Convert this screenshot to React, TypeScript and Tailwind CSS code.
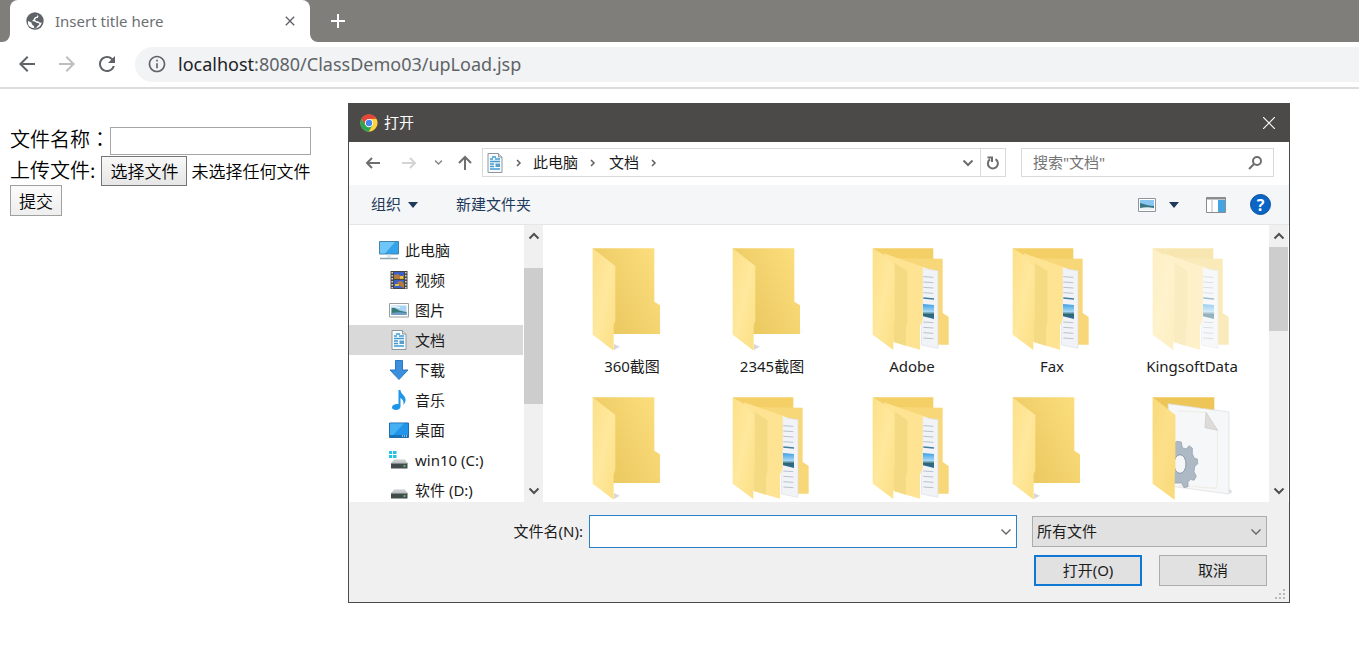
import React, { useState } from "react";
import {
  MdArrowBack,
  MdArrowForward,
  MdRefresh,
  MdInfoOutline,
  MdClose,
} from "react-icons/md";

function GlobeIcon() {
  return (
    <svg viewBox="0 0 54 54" className="size-[18px] shrink-0" aria-hidden="true">
      <circle cx="27" cy="27" r="26" fill="#5f6368" />
      <path
        d="M28 6c9 1 8 5 4 8-5 1-8 2-8 6 0 3-4 3-5 6 1 3 4 2 8 3 4 0 4 4 8 4 4 0 5 2 5 4-1 4-6 4-7 8-1 2-4 3-8 3-2-2 1-5-2-7-4-2-6-4-6-8-2-3-7-4-11-6-1 6 0 12 4 16 4 4 10 6 17 6 11 0 19-8 20-18-3 2-6 1-8-1-2-3-6-2-9-3-3-2-3-6 0-8 3-1 6-1 7-4C38 9 34 6 28 6z"
        fill="#fff"
      />
    </svg>
  );
}

function ChromeIcon() {
  return (
    <svg viewBox="0 0 48 48" className="size-[18px] shrink-0" aria-hidden="true">
      <circle cx="24" cy="24" r="23" fill="#fdd23c" />
      <path d="M4 12.500A23 23 0 0 1 44 12.500L24 13 14 30z" fill="#e2463a" />
      <path d="M4 12.500A23 23 0 0 0 23 47L33 30 24 34 14 29z" fill="#2fa355" />
      <circle cx="24" cy="24" r="11" fill="#fff" />
      <circle cx="24" cy="24" r="8.500" fill="#4488ee" />
    </svg>
  );
}

type StrokeProps = { d: string; className: string };

function Stroke({ d, className }: StrokeProps) {
  return (
    <svg viewBox="0 0 12 12" className={className} fill="none" stroke="currentColor" aria-hidden="true">
      <path d={d} />
    </svg>
  );
}

const DOWN = "M1.500 3.500 6 8l4.500-4.500";
const UP = "M1.500 8.500 6 4l4.500 4.500";
const RIGHT = "M4 3l3 3-3 3";

function DocIcon() {
  return (
    <svg viewBox="0 0 20 20" className="size-5 shrink-0" aria-hidden="true">
      <path d="M3 .5h10.500L17 4v15.500H3z" fill="#f7fafc" stroke="#8d979e" />
      <path d="M13.500.5V4H17" fill="#dde4e8" stroke="#8d979e" />
      <path d="M7 4h4M5 6h3M10 6h5M5 8.500h10M5 11h4M5 13.500h4M5 16h10" stroke="#3f9bd3" strokeWidth="1.300" />
      <path d="M10.500 10.500h4.500V14h-4.500z" fill="#5a9fc9" />
    </svg>
  );
}

function PictureIcon() {
  return (
    <svg viewBox="0 0 20 20" className="size-5 shrink-0" aria-hidden="true">
      <path d="M.5 3.500h19v13.500H.5z" fill="#fff" stroke="#9a9fa3" />
      <path d="M2.500 5.500h15V15h-15z" fill="#a9d5f5" />
      <path d="M2.500 8c3-1 5 1 8 2.500 3 1 5 1 7 1.500v3h-15z" fill="#3a7a78" />
      <path d="M2.500 13c5-1 10-1 15 0v2h-15z" fill="#6f9fc8" />
      <path d="M3 7c3-1 5 .5 8 .5" stroke="#fff" fill="none" />
    </svg>
  );
}

function PcIcon() {
  return (
    <svg viewBox="0 0 20 20" className="size-5 shrink-0" aria-hidden="true">
      <path d="M.5 1.500h19v12.500H.5z" fill="#35a3ea" stroke="#4782a8" />
      <path d="M1 2h15L6 13.500H1z" fill="#6fc6f8" />
      <path d="M8 14.500h4v3H8z" fill="#dbe8ee" />
      <path d="M1 18.500h18" stroke="#8fa3ae" strokeWidth="1.500" />
    </svg>
  );
}

function VideoIcon() {
  return (
    <svg viewBox="0 0 20 20" className="size-5 shrink-0" aria-hidden="true">
      <path d="M1.500 1h17v18h-17z" fill="#454545" />
      <path d="M5 2h10v7H5zM5 10h10v8H5z" fill="#3b5fc4" />
      <path d="M5 5l4-1 3 3 3-2v4H5zM8 12l5-1 2 3v4l-4-2z" fill="#b57a3c" />
      <path d="M11 6h3v3h-3zM6 14h4v2H6z" fill="#e5c33c" />
      <path d="M3.200 2v17M16.800 2v17" stroke="#d8d8d8" strokeWidth="1.500" strokeDasharray="1.500 1.500" />
    </svg>
  );
}

function DownloadIcon() {
  return (
    <svg viewBox="0 0 20 20" className="size-5 shrink-0" aria-hidden="true">
      <path d="M6.500.5h7V10H19l-9 9.500L1 10h5.500z" fill="#3b8fdd" stroke="#2c78c2" />
    </svg>
  );
}

function MusicIcon() {
  return (
    <svg viewBox="0 0 20 20" className="size-5 shrink-0" aria-hidden="true">
      <path
        d="M9.500 0h2c0 4 4.500 5 5 9 .3 3-1 4.500-2 6 .5-4-1-6-3-7v8.500c0 2-2 3.500-4.500 3.500C4.500 20 3 19 3 17.300 3 15 6 13.500 9.500 14z"
        fill="#1b96ea"
      />
    </svg>
  );
}

function DesktopIcon() {
  return (
    <svg viewBox="0 0 20 20" className="size-5 shrink-0" aria-hidden="true">
      <path d="M.5 3h19v14.500H.5z" fill="#2196e8" stroke="#1d6fae" />
      <path d="M1 3.500h14L4 15H1z" fill="#45b1f4" />
      <path d="M1 16h18" stroke="#1668a8" strokeWidth="1.500" />
      <path d="M13 16h1M15 16h1M17 16h1" stroke="#fff" />
    </svg>
  );
}

function DriveIcon({ system = false }: { system?: boolean }) {
  return (
    <svg viewBox="0 0 20 20" className="size-5 shrink-0" aria-hidden="true">
      {system && <path d="M0 1h3v3H0zM4 1h3.500v3H4zM0 5h3v3H0zM4 5h3.500v3H4z" fill="#22c4e8" />}
      <path d="M5 9.500h11l2.500 4H2z" fill="#c9cccd" />
      <path d="M2 13h16.500v5.500H2z" fill="#434a4b" />
      <path d="M2 13.200h16.500" stroke="#9fa4a6" />
      <path d="M14.500 16h2" stroke="#5ee06a" strokeWidth="1.500" />
    </svg>
  );
}

type FolderKind = "empty" | "files" | "gear";

function FolderDefs() {
  return (
    <svg className="absolute size-0" aria-hidden="true">
      <defs>
        <linearGradient id="folderBack" x1="0" y1="0.800" x2="1" y2="0.200">
          <stop offset="0.200" stopColor="#ecca62" />
          <stop offset="1" stopColor="#fbdd7c" />
        </linearGradient>
        <linearGradient id="folderFlap" x1="0" y1="0" x2="1" y2="1">
          <stop offset="0" stopColor="#fce08a" />
          <stop offset="0.500" stopColor="#ffe89c" />
          <stop offset="1" stopColor="#fbdf85" />
        </linearGradient>
        <linearGradient id="folderShadow" x1="0" y1="0" x2="1" y2="0">
          <stop offset="0" stopColor="#9a9a9a" stopOpacity="0.400" />
          <stop offset="1" stopColor="#9a9a9a" stopOpacity="0" />
        </linearGradient>
        <linearGradient id="photoSky" x1="0" y1="0" x2="0" y2="1">
          <stop offset="0" stopColor="#3d9fe6" />
          <stop offset="0.500" stopColor="#a8d8f5" />
          <stop offset="0.700" stopColor="#2f6672" />
          <stop offset="1" stopColor="#2b6fa0" />
        </linearGradient>
      </defs>
    </svg>
  );
}

function FolderIcon({ kind }: { kind: FolderKind }) {
  return (
    <svg viewBox="0 0 240 312" className="h-[104px] w-20" aria-hidden="true">
      {kind === "empty" && (
        <>
          <path d="M200 240l24 10-20 8zM66 288l18 8-18 10z" fill="url(#folderShadow)" />
          <path d="M2 1h185v160l17 11v86H60z" fill="url(#folderBack)" />
          <path d="M2 1l68 53v166l-5 12v76L2 260z" fill="url(#folderFlap)" />
        </>
      )}
      {kind === "files" && (
        <>
          <path d="M2 1h182v40H40z" fill="#f3cf66" />
          <path d="M60 30l152 2v163l18 12v83h-38V70z" fill="#f7d778" />
          <path d="M152 62l46 6v233l-50-10z" fill="#f1f3f7" stroke="#dcdfe4" strokeWidth="2" />
          <path
            d="M154 86l30 2M154 102l30 2M154 118l30 2M154 134l30 2M154 222l30 2M154 238l30 2M154 254l30 2M154 270l30 2"
            stroke="#b8c1cc"
            strokeWidth="3"
          />
          <path d="M154 150l32 3" stroke="#417d9e" strokeWidth="5" />
          <path d="M153 168l33 3v42l-33-8z" fill="url(#photoSky)" />
          <path d="M36 16l116 40v158l-8 20v71l-78-22z" fill="#fee392" />
          <path d="M68 45l38 24v152l-4 18v54l-38-12z" fill="#f4da83" />
          <path d="M2 1l34 20 32 36v160l-4 14v75L2 260z" fill="url(#folderFlap)" />
        </>
      )}
      {kind === "gear" && (
        <>
          <path d="M2 1h185v80H60z" fill="#eec657" />
          <path d="M230 276l18 8-16 6z" fill="url(#folderShadow)" />
          <path d="M48 20l183 25v246L60 268z" fill="#f6f7f8" stroke="#d9dadc" strokeWidth="2" />
          <path d="M80 42l82 4 34 54v150l-4 24-110-9" fill="none" stroke="#e9e5d9" strokeWidth="2" />
          <path d="M162 46l35 54-38-8z" fill="#dddcd8" stroke="#c9c8c5" strokeWidth="2" />
          <path
            d="M74 133l14 2 3 17 12 4 8-10 10 7 0 17 6 14 9 2 1 14-9 9-2 15 7 14-7 12-11-3-7 9v13l-12 3-7-14H62V142z"
            fill="#adbac6"
            stroke="#8e9ba8"
            strokeWidth="2"
          />
          <ellipse cx="84" cy="201" rx="18" ry="28" fill="#f5f6f7" stroke="#8997a5" strokeWidth="3" />
          <path d="M2 1l68 53v166l-2 12v76L2 260z" fill="url(#folderFlap)" />
          <path d="M2 1l68 53v166l-2 12v76L2 260z" fill="#f5c84e" fillOpacity="0.250" />
        </>
      )}
    </svg>
  );
}

const places = [
  { name: "此电脑", icon: <PcIcon />, root: true },
  { name: "视频", icon: <VideoIcon /> },
  { name: "图片", icon: <PictureIcon /> },
  { name: "文档", icon: <DocIcon />, current: true },
  { name: "下载", icon: <DownloadIcon /> },
  { name: "音乐", icon: <MusicIcon /> },
  { name: "桌面", icon: <DesktopIcon /> },
  { name: "win10 (C:)", icon: <DriveIcon system /> },
  { name: "软件 (D:)", icon: <DriveIcon /> },
];

const folders: { name: string; kind: FolderKind; hidden?: boolean }[] = [
  { name: "360截图", kind: "empty" },
  { name: "2345截图", kind: "empty" },
  { name: "Adobe", kind: "files" },
  { name: "Fax", kind: "files" },
  { name: "KingsoftData", kind: "files", hidden: true },
  { name: "", kind: "empty" },
  { name: "", kind: "files" },
  { name: "", kind: "files" },
  { name: "", kind: "empty" },
  { name: "", kind: "gear" },
];

function ScrollBar({ children }: { children: React.ReactNode }) {
  return (
    <div className="flex w-5 shrink-0 flex-col items-center border-r border-white bg-[#f0f0f0] text-[#505050]">
      <button type="button" aria-label="向上滚动" className="flex h-[22px] w-full items-center justify-center">
        <Stroke d={UP} className="size-3 stroke-2" />
      </button>
      <div className="flex w-full flex-1 flex-col">{children}</div>
      <button type="button" aria-label="向下滚动" className="flex h-[22px] w-full items-center justify-center">
        <Stroke d={DOWN} className="size-3 stroke-2" />
      </button>
    </div>
  );
}

function BrowserChrome() {
  return (
    <header>
      <div className="flex h-[42px] bg-[#807e7b]">
        <div className="w-[10px] bg-white">
          <div className="h-full rounded-br-lg bg-[#807e7b]" />
        </div>
        <div className="bg-[#807e7b]">
          <div className="flex h-full w-[300px] items-center rounded-t-lg bg-white pr-3 pl-4">
            <GlobeIcon />
            <span className="ml-[11px] flex-1 text-[15px] text-[#6b6f73]">Insert title here</span>
            <button type="button" aria-label="关闭标签页" className="text-[#5f6368]">
              <MdClose className="size-4" />
            </button>
          </div>
        </div>
        <div className="flex flex-1 bg-white">
          <div className="flex flex-1 items-center rounded-bl-lg bg-[#807e7b] pl-5">
            <button type="button" aria-label="新标签页" className="text-white">
              <svg viewBox="0 0 16 16" className="size-4 stroke-current stroke-2" aria-hidden="true">
                <path d="M8 1v14M1 8h14" />
              </svg>
            </button>
          </div>
        </div>
      </div>
      <nav className="flex h-[47px] items-center border-b-2 border-[#dcdcdc] pb-px pl-[15px] text-[#5f6368]">
        <button type="button" aria-label="后退">
          <MdArrowBack className="size-6" />
        </button>
        <button type="button" aria-label="前进" className="ml-4 text-[#bdbec0]">
          <MdArrowForward className="size-6" />
        </button>
        <button type="button" aria-label="刷新" className="ml-4">
          <MdRefresh className="size-6" />
        </button>
        <div className="ml-4 flex h-[35px] flex-1 items-center rounded-l-full bg-[#f1f3f4] pl-3">
          <MdInfoOutline className="size-5" />
          <p className="ml-[11px] text-lg">
            <span className="text-[#202124]">localhost</span>:8080/ClassDemo03/upLoad.jsp
          </p>
        </div>
      </nav>
    </header>
  );
}

function UploadForm() {
  const [name, setName] = useState("");
  return (
    <form
      className="px-[10px] pt-9 font-['Noto_Sans_CJK_SC',sans-serif] text-xl font-[350] text-black"
      onSubmit={(e) => e.preventDefault()}
    >
      <div className="flex h-[31px] items-center">
        <label htmlFor="fileTitle" className="pb-1">
          文件名称<span className="font-['Noto_Sans_CJK_TC',sans-serif]" lang="zh-TW">：</span>
        </label>
        <input
          id="fileTitle"
          value={name}
          onChange={(e) => setName(e.target.value)}
          className="h-7 w-[201px] border border-[#a6a6a6] bg-white px-1 text-[17px] outline-none"
        />
      </div>
      <div className="flex h-[29px] items-center">
        <span className="mr-[6px] pb-[2px]">上传文件:</span>
        <input id="upload" type="file" className="peer sr-only" />
        <label
          htmlFor="upload"
          className="flex h-[30px] items-center border border-[#767676] bg-linear-to-b from-[#f8f8f8] to-[#e6e6e6] px-2 text-[17px]"
        >
          选择文件
        </label>
        <span className="ml-1 text-[17px]">未选择任何文件</span>
      </div>
      <button
        type="submit"
        className="flex h-[31px] items-center border border-[#a0a0a0] bg-linear-to-b from-[#fbfbfb] to-[#eeeeee] px-2 text-[17px]"
      >
        提交
      </button>
    </form>
  );
}

function AddressRow() {
  return (
    <div className="flex h-[43px] items-center bg-white pr-[15px] pb-[2px] pl-[15px] text-[15px] text-[#1c1c1c]">
      <button type="button" aria-label="返回" className="text-[#6e6e6e]">
        <svg viewBox="0 0 18 18" className="size-[18px] fill-none stroke-current stroke-2" aria-hidden="true">
          <path d="M16 9H3M8 4L3 9l5 5" />
        </svg>
      </button>
      <button type="button" aria-label="前进" className="ml-[18px] text-[#d4d4d4]">
        <svg viewBox="0 0 18 18" className="size-[18px] fill-none stroke-current stroke-2" aria-hidden="true">
          <path d="M2 9h13M10 4l5 5-5 5" />
        </svg>
      </button>
      <button type="button" aria-label="最近浏览的位置" className="ml-4 text-[#8a8a8a]">
        <Stroke d={DOWN} className="size-[9px] stroke-2" />
      </button>
      <button type="button" aria-label="上移" className="ml-[13px] text-[#6e6e6e]">
        <svg viewBox="0 0 18 18" className="size-[18px] fill-none stroke-current stroke-2" aria-hidden="true">
          <path d="M9 16V3M3 9l6-6 6 6" />
        </svg>
      </button>
      <div className="ml-2 flex h-[29px] flex-1 items-center border border-[#d9d9d9] pl-[2px]">
        <DocIcon />
        <Stroke d={RIGHT} className="mx-2 size-3 stroke-[1.5px] text-[#606060]" />
        <span>此电脑</span>
        <Stroke d={RIGHT} className="mr-[10px] ml-[9px] size-3 stroke-[1.5px] text-[#606060]" />
        <span>文档</span>
        <Stroke d={RIGHT} className="mx-[9px] size-3 stroke-[1.5px] text-[#606060]" />
        <button type="button" aria-label="以前的位置" className="mr-[6px] ml-auto text-[#6e6e6e]">
          <Stroke d={DOWN} className="size-3 stroke-2" />
        </button>
        <button
          type="button"
          aria-label="刷新"
          className="flex h-full w-[25px] items-center justify-center border-l border-[#d9d9d9] text-[#6e6e6e]"
        >
          <svg viewBox="0 0 14 14" className="size-[14px] fill-none stroke-current stroke-2" aria-hidden="true">
            <path d="M9.500 3.200A5 5 0 1 1 4 3.400M1.500 1.500H6V6" />
          </svg>
        </button>
      </div>
      <div className="ml-[15px] flex h-[29px] w-[253px] items-center border border-[#d9d9d9] pr-[10px] pl-[11px]">
        <input
          type="search"
          aria-label="搜索文档"
          placeholder={'搜索"文档"'}
          className="min-w-0 flex-1 outline-none placeholder:text-[#757575]"
        />
        <svg viewBox="0 0 16 16" className="size-4 fill-none stroke-[#6e6e6e] stroke-2" aria-hidden="true">
          <circle cx="10" cy="6" r="4" />
          <path d="M7 9l-5 5" />
        </svg>
      </div>
    </div>
  );
}

function CommandRow() {
  return (
    <div className="flex h-10 items-center border-b border-[#e4e6e8] bg-[#f4f6f8] pr-[18px] pl-[22px] text-[15px] text-[#1e395b]">
      <button type="button" className="flex items-center gap-[7px]">
        组织
        <svg viewBox="0 0 10 6" className="h-[6px] w-[10px]" aria-hidden="true">
          <path d="M0 0h10L5 6z" fill="#1e395b" />
        </svg>
      </button>
      <button type="button" className="ml-[38px]">
        新建文件夹
      </button>
      <button type="button" aria-label="更改视图" className="ml-auto flex items-center gap-[13px]">
        <svg viewBox="0 0 18 14" className="h-[14px] w-[18px]" aria-hidden="true">
          <path d="M.5.5h17v13H.5z" fill="#fff" stroke="#8f9498" />
          <path d="M2 2h14v10H2z" fill="#8ac6f2" />
          <path d="M2 5c5 1 9 3 14 3v4H2z" fill="#387683" />
          <path d="M2 10c5-1 9-1 14 0v2H2z" fill="#edf3f5" />
        </svg>
        <svg viewBox="0 0 10 6" className="h-[6px] w-[10px]" aria-hidden="true">
          <path d="M0 0h10L5 6z" fill="#1e395b" />
        </svg>
      </button>
      <button type="button" aria-label="显示预览窗格" className="ml-[27px]">
        <svg viewBox="0 0 20 16" className="h-4 w-5" aria-hidden="true">
          <path d="M.5.5h19v15H.5z" fill="#fff" stroke="#8c8c8c" />
          <path d="M0 1.500h20" stroke="#8c8c8c" strokeWidth="2" />
          <path d="M6 3v12" stroke="#b8b8b8" />
          <path d="M12 3h7v12h-7z" fill="#45a5e2" />
        </svg>
      </button>
      <button
        type="button"
        aria-label="帮助"
        className="ml-6 flex size-[21px] items-center justify-center rounded-full border border-[#0b4f9b] bg-[#0b65c6] text-base font-bold text-white"
      >
        ?
      </button>
    </div>
  );
}

function FilePanes() {
  return (
    <div className="flex h-[277px] overflow-hidden bg-white text-[15px] text-[#1c1c1c]">
      <ul className="w-[175px] shrink-0 pt-[10px] pr-px">
        {places.map((p) => (
          <li key={p.name}>
            <button
              type="button"
              className={
                "flex h-[30px] w-full items-center gap-[6px] " +
                (p.root ? "pl-[30px] " : "pl-10 ") +
                (p.current ? "bg-[#d9d9d9]" : "")
              }
            >
              {p.icon}
              {p.name}
            </button>
          </li>
        ))}
      </ul>
      <ScrollBar>
        <div className="mt-[21px] h-[136px] bg-[#cdcdcd]" />
      </ScrollBar>
      <ul className="grid flex-1 grid-cols-5 content-start gap-y-[9px] pt-[23px] pr-[7px] pl-[18px]">
        {folders.map((f, i) => (
          <li key={i} className="flex h-[140px] flex-col items-center">
            <div className={f.hidden ? "opacity-50" : ""}>
              <FolderIcon kind={f.kind} />
            </div>
            <span className="mt-[3px] leading-[22px]">{f.name}</span>
          </li>
        ))}
      </ul>
      <ScrollBar>
        <div className="h-[84px] bg-[#cdcdcd]" />
      </ScrollBar>
    </div>
  );
}

function DialogFooter() {
  const [file, setFile] = useState("");
  return (
    <div className="relative bg-[#f0f0f0] px-[22px] pt-[13px] pb-4 text-[15px] text-[#1c1c1c]">
      <div className="flex items-center">
        <label htmlFor="fileName" className="w-[218px] pr-[6px] text-right">
          文件名(N):
        </label>
        <div className="flex h-[33px] flex-1 items-center border border-[#2a7fc9] bg-white pr-1">
          <input
            id="fileName"
            value={file}
            onChange={(e) => setFile(e.target.value)}
            className="min-w-0 flex-1 px-1 outline-none"
          />
          <button type="button" aria-label="显示文件名列表" className="text-[#606060]">
            <Stroke d={DOWN} className="size-3 stroke-[1.3px]" />
          </button>
        </div>
        <div className="ml-[15px] grid w-[235px] items-center">
          <select
            aria-label="文件类型"
            className="col-start-1 row-start-1 h-[31px] appearance-none border border-[#acacac] bg-[#e1e1e1] px-1 outline-none"
          >
            <option>所有文件</option>
          </select>
          <Stroke
            d={DOWN}
            className="pointer-events-none col-start-1 row-start-1 mr-[5px] size-3 justify-self-end stroke-[1.3px] text-[#606060]"
          />
        </div>
      </div>
      <div className="mt-[7px] flex justify-end gap-[17px]">
        <button type="button" className="h-[31px] w-[108px] border-2 border-[#0f78d4] bg-[#e1e1e1]">
          打开(O)
        </button>
        <button type="button" className="h-[31px] w-[108px] border border-[#acacac] bg-[#e1e1e1]">
          取消
        </button>
      </div>
      <svg viewBox="0 0 12 12" className="absolute right-[3px] bottom-[2px] size-3" aria-hidden="true">
        <path
          d="M9 1h2v2H9zM5 5h2v2H5zM9 5h2v2H9zM1 9h2v2H1zM5 9h2v2H5zM9 9h2v2H9z"
          fill="#b9b9b9"
        />
      </svg>
    </div>
  );
}

function OpenDialog() {
  return (
    <section
      role="dialog"
      aria-label="打开"
      className="absolute top-[103px] right-[69px] left-[348px] border border-[#4b4a48]"
    >
      <FolderDefs />
      <div className="flex h-[38px] items-center bg-[#4b4a48] pr-[14px] pb-px pl-[11px] text-white">
        <ChromeIcon />
        <h1 className="ml-[6px] flex-1 text-[15px]">打开</h1>
        <button type="button" aria-label="关闭">
          <Stroke d="M0 0l12 12M12 0L0 12" className="size-3 stroke-[1.2px]" />
        </button>
      </div>
      <AddressRow />
      <CommandRow />
      <FilePanes />
      <DialogFooter />
    </section>
  );
}

export default function App() {
  return (
    <div className="relative min-h-screen overflow-hidden bg-white font-['Noto_Sans','Noto_Sans_CJK_SC',sans-serif]">
      <BrowserChrome />
      <main>
        <UploadForm />
        <OpenDialog />
      </main>
    </div>
  );
}
